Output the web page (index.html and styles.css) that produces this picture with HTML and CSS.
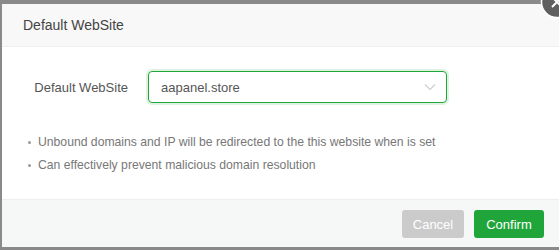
FILE: index.html
```html
<!DOCTYPE html>
<html lang="en">
  <head>
    <meta charset="UTF-8" />
    <title>Default WebSite</title>
    <link rel="stylesheet" href="styles.css">
  </head>
  <body>
    <div class="layer">
      <div class="layer__title">Default WebSite</div>
      <div class="layer__content">
        <div class="form__line">
          <span class="form__label">Default WebSite</span>
          <div class="form__select">
            <span>aapanel.store</span>
            <svg class="form__arrow" width="12" height="8" viewBox="0 0 12 8">
              <path d="M1 1.5 L6 6.5 L11 1.5" fill="none" stroke="#cfcfcf" stroke-width="1.2" />
            </svg>
          </div>
        </div>
        <ul class="tips">
          <li>Unbound domains and IP will be redirected to the this website when is set</li>
          <li>Can effectively prevent malicious domain resolution</li>
        </ul>
      </div>
      <div class="layer__btns">
        <button class="btn btn--cancel">Cancel</button>
        <button class="btn btn--confirm">Confirm</button>
      </div>
      <a class="layer__close" href="#">
        <svg width="34" height="34" viewBox="0 0 34 34">
          <circle cx="17" cy="17" r="15.5" fill="#5f5f5f" stroke="#fff" stroke-width="1.5" />
          <path d="M12 12 L22 22 M22 12 L12 22" stroke="#fff" stroke-width="2" />
        </svg>
      </a>
    </div>
  </body>
</html>
```

FILE: styles.css
```css
* {
  margin: 0;
  padding: 0;
  box-sizing: border-box;
}

html,
body {
  height: 100%;
  overflow: hidden;
}

body {
  background-color: #8a8a8a;
  font-family: "Liberation Sans", Arial, sans-serif;
  padding: 4px 0 3px 2px;
}

.layer {
  position: relative;
  display: flex;
  flex-direction: column;
  height: 243px;
  background-color: #fff;
}

.layer__title {
  height: 43px;
  line-height: 42px;
  padding: 0 21px;
  font-size: 14px;
  color: #444;
  background-color: #f8f8f8;
  border-bottom: 1px solid #eee;
}

.layer__content {
  flex: 1;
  padding-top: 24px;
}

.form__line {
  display: flex;
  align-items: center;
}

.form__label {
  width: 126px;
  margin-right: 20px;
  text-align: right;
  font-size: 13px;
  color: #555;
}

.form__select {
  display: flex;
  align-items: center;
  justify-content: space-between;
  width: 299px;
  height: 32px;
  padding: 0 10px 0 12px;
  font-size: 13px;
  color: #555;
  border: 1px solid #20a53a;
  border-radius: 4px;
  box-shadow: 0 0 0 2px rgba(32, 165, 58, 0.15);
}

.tips {
  list-style: none;
  margin-top: 28px;
  padding-left: 36px;
}

.tips li {
  position: relative;
  line-height: 23px;
  font-size: 12.2px;
  color: #777;
}

.tips li::before {
  content: "";
  position: absolute;
  left: -10px;
  top: 10px;
  width: 3px;
  height: 3px;
  border-radius: 50%;
  background-color: #999;
}

.layer__btns {
  display: flex;
  justify-content: flex-end;
  gap: 10px;
  height: 48px;
  padding: 10px 15px 0 0;
  background-color: #f6f7f7;
  border-top: 1px solid #eee;
}

.btn {
  height: 28px;
  padding: 0;
  border: none;
  border-radius: 3px;
  font-family: inherit;
  font-size: 13px;
  color: #fff;
}

.btn--cancel {
  width: 62px;
  background-color: #cbcbcb;
}

.btn--confirm {
  width: 70px;
  background-color: #20a53a;
}

.layer__close {
  position: absolute;
  top: -19px;
  right: -15px;
}
```
